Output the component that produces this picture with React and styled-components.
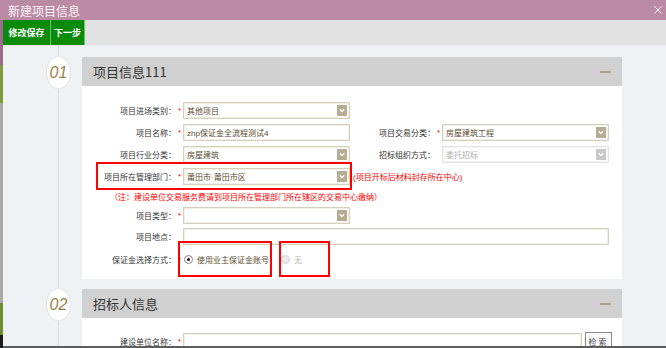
import React from "react"
import styled, { createGlobalStyle } from "styled-components"

const GlobalStyle = createGlobalStyle`
  html, body { margin: 0; padding: 0; }
  body {
    font-family: "Liberation Sans", "Noto Sans CJK SC", sans-serif;
    background: #eef2f5;
  }
`

const Page = styled.div`
  width: 666px;
  height: 348px;
  overflow: hidden;
  display: flex;
  flex-direction: column;
`

const TitleBar = styled.div`
  height: 20px;
  flex: none;
  background: #bb8ba5;
  display: flex;
  align-items: center;
  justify-content: space-between;
  padding: 0 3px 0 8px;
  color: #fbf3f7;
  font-family: "Noto Sans CJK SC", sans-serif;
  font-size: 12px;
`

const Shell = styled.div`
  flex: 1;
  display: flex;
  min-height: 0;
`

const Strip = styled.div`
  width: 3px;
  flex: none;
  display: flex;
  flex-direction: column;
`

const Band = styled.div`
  height: ${p => p.$h}px;
  flex: ${p => (p.$grow ? 1 : "none")};
  background: ${p => p.$c};
`

const Main = styled.div`
  flex: 1;
  display: flex;
  flex-direction: column;
  min-width: 0;
`

const Toolbar = styled.div`
  height: 25px;
  flex: none;
  display: flex;
  background: #e1e1e1;
  border-bottom: 1px solid #e8ebed;
`

const ToolButton = styled.div`
  width: ${p => p.$w}px;
  display: flex;
  align-items: center;
  justify-content: center;
  background: #0a8c0a;
  color: #fff;
  font-family: "Noto Sans CJK SC", sans-serif;
  font-size: 9px;
  font-weight: bold;
  border-right: 1px solid #6cbf6c;
`

const Content = styled.div`
  flex: 1;
  min-height: 0;
  overflow: hidden;
  padding-top: 11px;
  background: linear-gradient(#d6dadd, #d6dadd) no-repeat 55px 0 / 1px 100%, #eef2f5;
`

const Section = styled.div`
  display: flex;
  margin-bottom: 10px;
`

const Marker = styled.div`
  width: 79px;
  flex: none;
`

const StepCircle = styled.div`
  width: 23px;
  height: 31px;
  margin-left: 44px;
  border-radius: 50%;
  background: #fff;
  box-shadow: 0 0 0 1px #e4e6e8;
  display: flex;
  align-items: center;
  justify-content: center;
  font-family: "Liberation Sans", sans-serif;
  font-style: italic;
  font-size: 16px;
  color: #9b8149;
`

const Card = styled.div`
  width: 540px;
  flex: none;
`

const CardHeader = styled.div`
  height: 29px;
  background: #d0d0d0;
  display: flex;
  align-items: center;
  justify-content: space-between;
  padding: 0 11px;
  font-family: "Noto Sans CJK SC", sans-serif;
  font-size: 13px;
  color: #333;
`

const Minus = styled.span`
  width: 11px;
  height: 2px;
  background: #a8a28f;
`

const CardBody = styled.div`
  background: #fff;
  padding: ${p => p.$pad || "13px 0 8px"};
  display: flex;
  flex-direction: column;
`

const Row = styled.div`
  height: ${p => p.$h || 22}px;
  display: flex;
  align-items: center;
  font-family: "Liberation Sans", "Noto Sans CJK SC", sans-serif;
  font-size: 8px;
`

const Label = styled.span`
  width: ${p => p.$w || 94}px;
  flex: none;
  text-align: right;
  white-space: nowrap;
  color: #333;
`

const Star = styled.span`
  width: 7px;
  flex: none;
  text-align: center;
  color: #f00;
  visibility: ${p => (p.$hide ? "hidden" : "visible")};
`

const Field = styled.div`
  width: ${p => p.$w || 167}px;
  height: 17px;
  flex: none;
  box-sizing: border-box;
  display: flex;
  align-items: center;
  padding-left: 3px;
  background: #fff;
  border: 1px solid ${p => (p.$disabled ? "#e3e3e3" : "#d6d0bb")};
  box-shadow: inset 0 0 0 1px ${p => (p.$disabled ? "#f4f4f4" : "#f2efe6")};
  color: ${p => (p.$disabled ? "#b0b0b0" : "#5a4a2d")};
  white-space: nowrap;
`

const Arrow = styled.span`
  margin-left: auto;
  margin-right: 2px;
  width: 10px;
  height: 11px;
  display: flex;
  align-items: center;
  justify-content: center;
  background: ${p => (p.$disabled ? "#c8c8c8" : "#b5ad93")};
`

const Highlight = styled.div`
  height: 28px;
  margin: -3px 0 -3px 14px;
  padding-right: 2px;
  display: flex;
  align-items: center;
  outline: 2px solid #f00;
  outline-offset: -2px;
`

const RedText = styled.span`
  color: #f00;
  white-space: nowrap;
  margin-left: ${p => p.$ml || 0}px;
`

const RadioBox = styled.div`
  width: ${p => p.$w}px;
  height: 36px;
  margin: -6px 0 -6px ${p => p.$ml}px;
  padding-left: ${p => p.$pl}px;
  box-sizing: border-box;
  display: flex;
  align-items: center;
  gap: 4px;
  outline: 2px solid #f00;
  outline-offset: -2px;
  color: ${p => (p.$disabled ? "#b5b5b5" : "#5a4a2d")};
  white-space: nowrap;
`

const RadioDot = styled.span`
  width: 9px;
  height: 9px;
  flex: none;
  box-sizing: border-box;
  border-radius: 50%;
  border: 1px solid ${p => (p.$disabled ? "#d4d4d4" : "#8a8a8a")};
  background: ${p => (p.$disabled ? "#ececec" : "#fff")};
  display: flex;
  align-items: center;
  justify-content: center;
  &::after {
    content: "";
    width: 3px;
    height: 3px;
    border-radius: 50%;
    background: #111;
    display: ${p => (p.$checked ? "block" : "none")};
  }
`

const SearchButton = styled.div`
  width: 27px;
  height: 18px;
  margin-left: 3px;
  flex: none;
  box-sizing: border-box;
  border: 1px solid #8a8a8a;
  background: #fafafa;
  display: flex;
  align-items: center;
  justify-content: center;
  color: #444;
  letter-spacing: 2px;
`

const BottomBar = styled.div`
  height: 2px;
  flex: none;
  background: #5d5d5d;
`

const Chevron = () => (
  <svg width="6" height="5" viewBox="0 0 6 5">
    <path d="M0.8 1.2 L3 3.6 L5.2 1.2" fill="none" stroke="#fff" strokeWidth="1.3" />
  </svg>
)

const Select = ({ value, w, disabled }) => (
  <Field $w={w} $disabled={disabled}>
    {value}
    <Arrow $disabled={disabled}>
      <Chevron />
    </Arrow>
  </Field>
)

const CloseIcon = () => (
  <svg width="10" height="10" viewBox="0 0 10 10">
    <path d="M1 1 L9 9 M9 1 L1 9" stroke="#fbf3f7" strokeWidth="1" />
  </svg>
)

const strip = [
  [45, "#9c6b8d"],
  [38, "#7d9a3d"],
  [0, "#a9a9a9", true],
  [32, "#6b8f2e"],
  [13, "#1c1c1c"],
]

export default function App() {
  return (
    <Page>
      <GlobalStyle />
      <TitleBar>
        新建项目信息
        <CloseIcon />
      </TitleBar>
      <Shell>
        <Strip>
          {strip.map(([h, c, grow], i) => (
            <Band key={i} $h={h} $c={c} $grow={grow} />
          ))}
        </Strip>
        <Main>
          <Toolbar>
            <ToolButton $w={47}>修改保存</ToolButton>
            <ToolButton $w={33}>下一步</ToolButton>
          </Toolbar>
          <Content>
            <Section>
              <Marker>
                <StepCircle>01</StepCircle>
              </Marker>
              <Card>
                <CardHeader>
                  项目信息111
                  <Minus />
                </CardHeader>
                <CardBody>
                  <Row>
                    <Label>项目进场类别：</Label>
                    <Star>*</Star>
                    <Select value="其他项目" />
                  </Row>
                  <Row>
                    <Label>项目名称：</Label>
                    <Star>*</Star>
                    <Field>zhp保证金全流程测试4</Field>
                    <Label $w={85}>项目交易分类：</Label>
                    <Star>*</Star>
                    <Select value="房屋建筑工程" />
                  </Row>
                  <Row>
                    <Label>项目行业分类：</Label>
                    <Star $hide>*</Star>
                    <Select value="房屋建筑" />
                    <Label $w={85}>招标组织方式：</Label>
                    <Star $hide>*</Star>
                    <Select value="委托招标" disabled />
                  </Row>
                  <Row>
                    <Highlight>
                      <Label $w={80}>项目所在管理部门：</Label>
                      <Star>*</Star>
                      <Select value="莆田市·莆田市区" />
                    </Highlight>
                    <RedText $ml={1}>(项目开标后材料封存所在中心)</RedText>
                  </Row>
                  <Row $h={18}>
                    <RedText $ml={28}>（注：建设单位交易服务费请到项目所在管理部门所在辖区的交易中心缴纳）</RedText>
                  </Row>
                  <Row $h={21}>
                    <Label>项目类型：</Label>
                    <Star>*</Star>
                    <Select value="" />
                  </Row>
                  <Row $h={21}>
                    <Label>项目地点：</Label>
                    <Star $hide>*</Star>
                    <Field $w={426} />
                  </Row>
                  <Row $h={24}>
                    <Label>保证金选择方式：</Label>
                    <Star>*</Star>
                    <RadioBox $w={94} $ml={-5} $pl={6}>
                      <RadioDot $checked />
                      使用业主保证金账号
                    </RadioBox>
                    <RadioBox $w={51} $ml={7} $pl={2} $disabled>
                      <RadioDot $disabled />
                      无
                    </RadioBox>
                  </Row>
                </CardBody>
              </Card>
            </Section>
            <Section>
              <Marker>
                <StepCircle>02</StepCircle>
              </Marker>
              <Card>
                <CardHeader>
                  招标人信息
                  <Minus />
                </CardHeader>
                <CardBody $pad="12px 0 8px">
                  <Row>
                    <Label>建设单位名称：</Label>
                    <Star>*</Star>
                    <Field $w={399} />
                    <SearchButton>检索</SearchButton>
                  </Row>
                </CardBody>
              </Card>
            </Section>
          </Content>
          <BottomBar />
        </Main>
      </Shell>
    </Page>
  )
}
